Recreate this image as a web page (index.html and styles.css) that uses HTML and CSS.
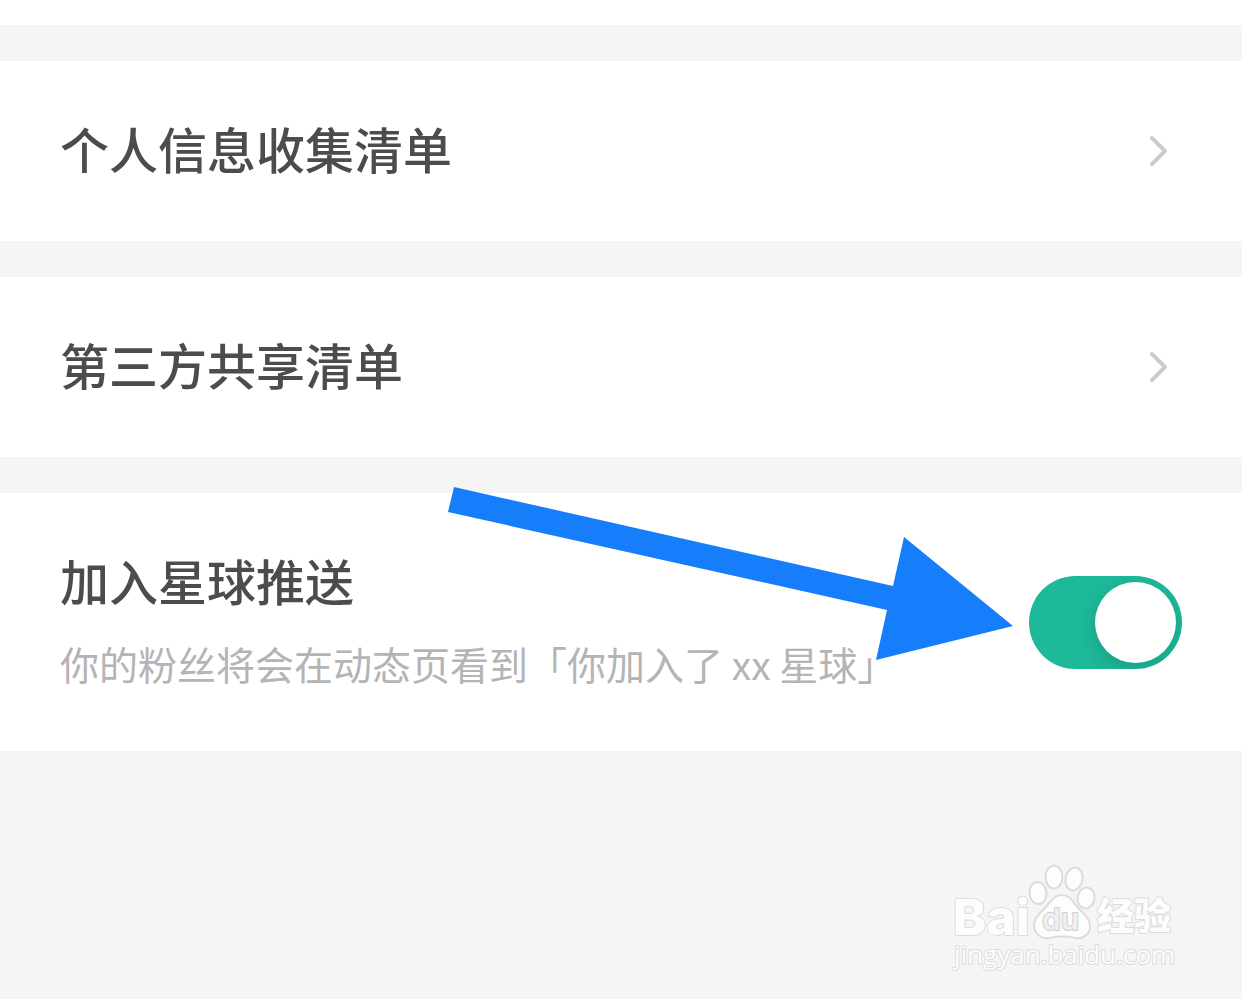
FILE: index.html
```
<!DOCTYPE html>
<html lang="zh-CN">
  <head>
    <meta charset="UTF-8" />
    <meta name="viewport" content="width=device-width, initial-scale=1" />
    <title>隐私设置</title>
    <link rel="stylesheet" href="styles.css">
  </head>
  <body>
    <header class="top"></header>
    <main class="list">
      <a class="item" href="#collect">
        <span class="title">个人信息收集清单</span>
        <svg class="chevron" viewBox="0 0 22 34" aria-hidden="true"><path d="M4 4 17 17 4 30" /></svg>
      </a>
      <a class="item" href="#share">
        <span class="title">第三方共享清单</span>
        <svg class="chevron" viewBox="0 0 22 34" aria-hidden="true"><path d="M4 4 17 17 4 30" /></svg>
      </a>
      <div class="item item-push">
        <label class="text" for="push">
          <span class="title">加入星球推送</span>
          <span class="desc">你的粉丝将会在动态页看到「你加入了 xx 星球」</span>
        </label>
        <input class="switch" type="checkbox" role="switch" id="push" checked />
        <!-- pointer to the switch -->
        <svg class="arrow" viewBox="0 0 565 173" aria-hidden="true">
          <path d="M6 0 445 99 456 50 565 139 428 173 439 123 0 25Z" />
        </svg>
      </div>
    </main>
    <footer class="footer">
      <svg class="watermark" viewBox="0 0 230 116" role="img" aria-label="Baidu 经验 jingyan.baidu.com">
        <g class="paw">
          <ellipse cx="88" cy="31" rx="8.5" ry="11" transform="rotate(-6 88 31)" />
          <ellipse cx="104" cy="15" rx="8.5" ry="11.5" />
          <ellipse cx="124" cy="17" rx="8.5" ry="11.5" transform="rotate(12 124 17)" />
          <ellipse cx="136" cy="36" rx="8.5" ry="10.5" transform="rotate(10 136 36)" />
          <path d="M112 33C103 33 100 41 94 47C88 53 84 57 84 64C85 73 92 77 99 76C108 74 116 74 125 76C134 77 140 72 140 64C140 57 135 53 129 47C123 41 121 33 112 33Z" />
        </g>
        <text class="logo" x="3" y="73">Bai</text>
        <text class="logo-du" x="92" y="68">du</text>
        <text class="logo-cn" x="147" y="68">经验</text>
        <text class="site" x="4" y="102">jingyan.baidu.com</text>
      </svg>
    </footer>
  </body>
</html>
```
FILE: styles.css
```
* {
  box-sizing: border-box;
}
body {
  margin: 0;
  min-height: 100vh;
  background: #f5f5f5;
  font-family: "Noto Sans CJK SC", sans-serif;
  display: flex;
  flex-direction: column;
}
.top {
  height: 25px;
  background: white;
}
.list {
  display: flex;
  flex-direction: column;
  gap: 36px;
  margin-top: 36px;
}
.item {
  position: relative;
  display: flex;
  justify-content: space-between;
  align-items: center;
  min-height: 180px;
  padding: 0 60px;
  background: white;
  text-decoration: none;
}
.item-push {
  min-height: 258px;
}
.text {
  display: flex;
  flex-direction: column;
  gap: 4px;
}
.title {
  padding-bottom: 6px;
  color: #4c4c4c;
  font-size: 49px;
  font-weight: 500;
  line-height: 72px;
}
.desc {
  color: #b4b4b4;
  font-size: 39px;
  font-weight: 400;
  line-height: 74px;
}
.chevron {
  width: 22px;
  height: 34px;
  margin-right: 12px;
  fill: none;
  stroke: #cccccc;
  stroke-width: 4;
  stroke-linecap: round;
  stroke-linejoin: round;
}
.switch {
  appearance: none;
  flex-shrink: 0;
  display: flex;
  width: 153px;
  height: 93px;
  margin: 0;
  padding: 6px;
  border-radius: 47px;
  background: #cccccc;
  overflow: hidden;
  cursor: pointer;
}
.switch::before {
  content: "";
  width: 81px;
  height: 81px;
  border-radius: 50%;
  background: white;
  box-shadow: 0 6px 18px rgba(0, 0, 0, 0.15);
}
.switch:checked {
  justify-content: flex-end;
  background: #1db998;
}
.arrow {
  position: absolute;
  top: -6px;
  right: 229px;
  width: 565px;
  height: 173px;
  fill: #167efb;
  pointer-events: none;
}
.footer {
  display: flex;
  justify-content: flex-end;
  margin-top: auto;
  padding: 0 62px 21px;
}
.watermark {
  width: 230px;
  height: 116px;
  fill: #fdfdfd;
  stroke: #dcdcdc;
  stroke-width: 2;
  stroke-linejoin: round;
}
.watermark text {
  paint-order: stroke;
}
.logo {
  font-family: Inter, sans-serif;
  font-size: 50px;
  font-weight: 800;
}
.watermark .logo-du {
  font-family: Inter, sans-serif;
  font-size: 30px;
  font-weight: 600;
  fill: #efefef;
  stroke: #cfcfcf;
}
.logo-cn {
  font-size: 37px;
  font-weight: 900;
}
.site {
  font-family: "Open Sans", sans-serif;
  font-size: 26px;
}
```
